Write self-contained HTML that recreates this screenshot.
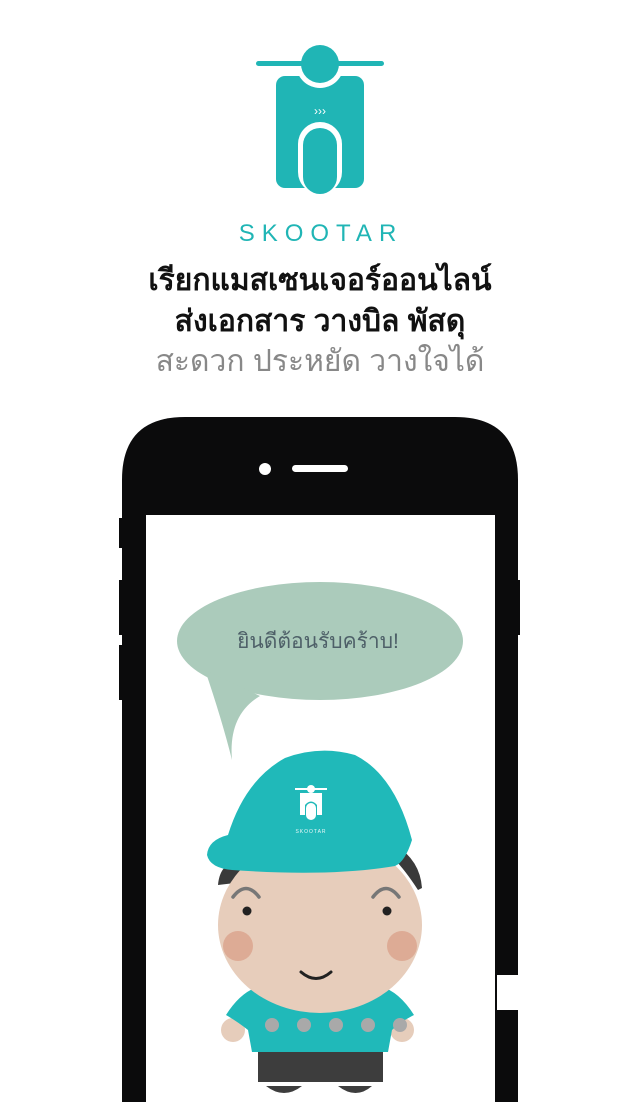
<!DOCTYPE html>
<html><head><meta charset="utf-8"><style>
html,body{margin:0;padding:0;background:#fff;width:640px;height:1102px;overflow:hidden}
svg{display:block}
</style></head><body>
<svg width="640" height="1102" viewBox="0 0 640 1102" xmlns="http://www.w3.org/2000/svg">
<!-- logo -->
<rect x="276" y="76" width="88" height="112" rx="9" fill="#20b5b5"/>
<circle cx="320" cy="64" r="24" fill="#fff"/>
<circle cx="320" cy="64" r="19" fill="#20b5b5"/>
<rect x="256" y="61" width="128" height="5" rx="2.5" fill="#20b5b5"/>
<rect x="298" y="122" width="44" height="72" rx="22" fill="#fff"/>
<rect x="303" y="128" width="34" height="66" rx="17" fill="#20b5b5"/>
<text x="320" y="115" font-family="Liberation Sans, sans-serif" font-size="12" fill="#fff" text-anchor="middle">›››</text>
<text x="321" y="241" font-family="Liberation Sans, sans-serif" font-size="24" fill="#20b5b5" text-anchor="middle" letter-spacing="7">SKOOTAR</text>
<text x="320" y="290" font-family="Liberation Sans, DejaVu Sans, sans-serif" font-size="30" font-weight="bold" fill="#111" text-anchor="middle">เรียกแมสเซนเจอร์ออนไลน์</text>
<text x="320" y="331" font-family="Liberation Sans, DejaVu Sans, sans-serif" font-size="30" font-weight="bold" fill="#111" text-anchor="middle">ส่งเอกสาร วางบิล พัสดุ</text>
<text x="320" y="371" font-family="Liberation Sans, DejaVu Sans, sans-serif" font-size="30" fill="#888" text-anchor="middle">สะดวก ประหยัด วางใจได้</text>
<!-- phone -->
<rect x="119" y="518" width="6" height="30" fill="#0b0b0c"/>
<rect x="119" y="580" width="6" height="55" fill="#0b0b0c"/>
<rect x="119" y="645" width="6" height="55" fill="#0b0b0c"/>
<rect x="514" y="580" width="6" height="55" fill="#0b0b0c"/>
<path d="M122 1102 V480 Q122 417 185 417 H455 Q518 417 518 480 V1102 Z" fill="#0b0b0c"/>
<rect x="146" y="515" width="349" height="600" fill="#fff"/>
<circle cx="265" cy="469" r="6" fill="#fff"/>
<rect x="292" y="465" width="56" height="7" rx="3.5" fill="#fff"/>
<!-- bubble -->
<ellipse cx="320" cy="641" rx="143" ry="59" fill="#abcbbb"/>
<path d="M205 670 Q222 720 232 760 Q228 715 260 696 Z" fill="#abcbbb"/>
<text x="318" y="648" font-family="Liberation Sans, DejaVu Sans, sans-serif" font-size="21" fill="#4e6068" text-anchor="middle">ยินดีต้อนรับคร้าบ!</text>
<!-- character -->
<ellipse cx="233" cy="1030" rx="12" ry="12" fill="#e6cdbb"/>
<ellipse cx="402" cy="1030" rx="12" ry="12" fill="#e6cdbb"/>
<path d="M258 1050 H383 V1082 H258 Z" fill="#3d3d3d"/>
<path d="M266 1086 Q284 1100 302 1086 Z M338 1086 Q356 1100 372 1086 Z" fill="#3d3d3d"/>
<path d="M226 1015 Q245 985 270 985 H370 Q395 985 414 1015 Q400 1022 392 1030 L388 1052 H252 L248 1030 Q238 1022 226 1015 Z" fill="#20b9b9"/>
<path d="M218 885 Q220 860 245 860 L260 880 Z M395 845 Q420 860 422 888 L418 890 Q405 870 395 860 Z" fill="#3a3a3a"/>
<ellipse cx="320" cy="925" rx="102" ry="88" fill="#e7cdbb"/>
<path d="M232 870 Q210 868 207 855 Q208 840 228 835 Q245 780 285 758 Q320 745 355 755 Q395 775 412 840 Q405 862 395 866 Q330 877 232 870 Z" fill="#20b9b9"/>
<g fill="#fff"><rect x="295" y="788" width="32" height="2"/><circle cx="311" cy="789" r="4"/><path d="M300 793 H322 V815 H317 V805 Q311 798 305 805 V815 H300Z"/><rect x="306" y="803" width="10" height="17" rx="5"/></g>
<text x="311" y="833" font-family="Liberation Sans, sans-serif" font-size="5" fill="#e8f8f8" text-anchor="middle" letter-spacing="1">SKOOTAR</text>
<path d="M233 897 Q246 880 259 897 M373 897 Q386 880 399 897" stroke="#777" stroke-width="3.5" fill="none" stroke-linecap="round"/>
<circle cx="247" cy="911" r="4.5" fill="#222"/><circle cx="387" cy="911" r="4.5" fill="#222"/>
<circle cx="238" cy="946" r="15" fill="#ddab95"/><circle cx="402" cy="946" r="15" fill="#ddab95"/>
<path d="M301 972 Q316 985 331 972" stroke="#222" stroke-width="3" fill="none" stroke-linecap="round"/>
<g fill="#a9a9a9"><circle cx="272" cy="1025" r="7"/><circle cx="304" cy="1025" r="7"/><circle cx="336" cy="1025" r="7"/><circle cx="368" cy="1025" r="7"/><circle cx="400" cy="1025" r="7"/></g>
<rect x="497" y="975" width="23" height="35" fill="#fff"/>
</svg>
</body></html>
